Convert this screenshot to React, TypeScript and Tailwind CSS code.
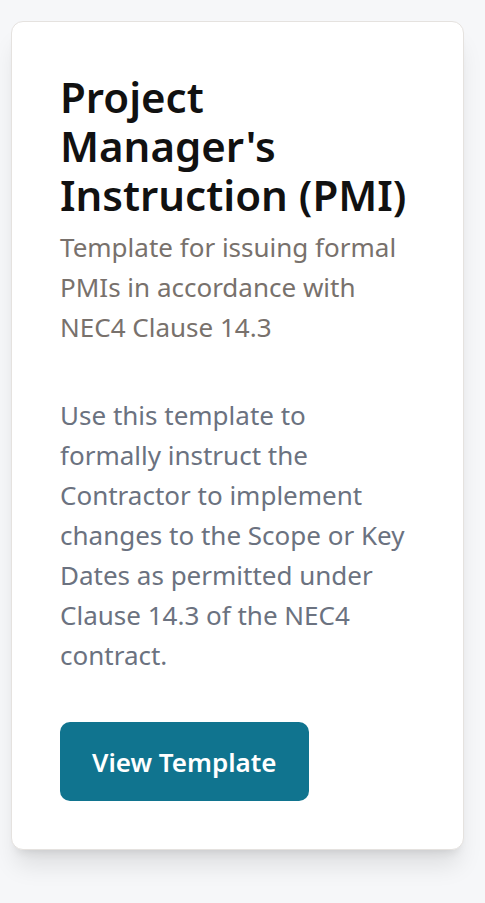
export default function App() {
  return (
    <div
      className="min-h-screen bg-[#f6f7f9] pl-[11px] pr-[21px] pt-[21px] pb-10"
      style={{ fontFamily: '"Noto Sans", "Open Sans", sans-serif' }}
    >
      {/* Template card */}
      <div className="rounded-xl border border-[#e5e2df] bg-white p-12 shadow-xl">
        <h2 className="mt-[2px] mb-2 text-[42px] leading-[49px] font-semibold text-[#111111]">
          Project Manager's Instruction (PMI)
        </h2>
        <p className="text-[26px] leading-10 text-[#78716c]">
          Template for issuing formal PMIs in accordance with NEC4 Clause 14.3
        </p>
        <p className="mt-12 text-[26px] leading-10 text-[#6b7280]">
          Use this template to
          <br />
          formally instruct the Contractor to implement changes to the Scope or Key
          <br />
          Dates as permitted under Clause 14.3 of the NEC4 contract.
        </p>
        <button className="mt-[47px] rounded-[10px] bg-[#10748f] px-8 pt-[21px] pb-[19px] text-[26px] leading-[39px] font-semibold text-white">
          View Template
        </button>
      </div>
    </div>
  );
}
